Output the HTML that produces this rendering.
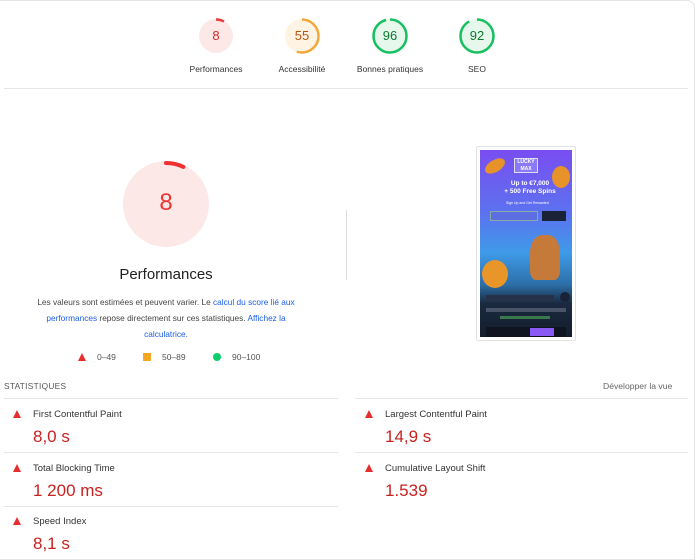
<!DOCTYPE html>
<html><head><meta charset="utf-8"><style>
*{margin:0;padding:0;box-sizing:border-box}
body{width:700px;height:555px;background:#fff;font-family:"Liberation Sans",sans-serif;position:relative;overflow:hidden;color:#212121}
.a{position:absolute}
.frame{left:-2px;top:0;width:697px;height:560px;border:1px solid #e4e4e4;border-radius:0 8px 0 0}
.lbl{font-size:8.5px;color:#333;text-align:center;width:100px}
.num{font-size:13px;text-align:center;width:40px}
.hr{height:1px;background:#e6e6e6}
.tri{width:0;height:0;border-left:4.5px solid transparent;border-right:4.5px solid transparent;border-bottom:8px solid #e62e2e}
.mn{font-size:9.5px;color:#333}
.mv{font-size:17px;color:#c7221f}
a{color:#1a5ee8;text-decoration:none}
</style></head><body>
<div class="a frame"></div>
<svg class="a" style="left:0;top:0" width="700" height="260">
 <g fill="none" stroke-width="2.5">
  <circle cx="216" cy="36" r="17" fill="#fde8e8" stroke="none"/>
  <circle cx="216" cy="36" r="16.5" stroke="#e63b3b" stroke-dasharray="8.3 200" transform="rotate(-90 216 36)"/>
  <circle cx="302" cy="36" r="17" fill="#fff3e3" stroke="none"/>
  <circle cx="302" cy="36" r="16.5" stroke="#f2a83a" stroke-dasharray="57 200" transform="rotate(-90 302 36)"/>
  <circle cx="390" cy="36" r="17" fill="#e6f7ec" stroke="none"/>
  <circle cx="390" cy="36" r="16.5" stroke="#16c060" stroke-dasharray="99.5 200" transform="rotate(-90 390 36)"/>
  <circle cx="477" cy="36" r="17" fill="#e6f7ec" stroke="none"/>
  <circle cx="477" cy="36" r="16.5" stroke="#16c060" stroke-dasharray="95.4 200" transform="rotate(-90 477 36)"/>
  <circle cx="166" cy="204" r="43" fill="#fde8e8" stroke="none"/>
  <circle cx="166" cy="204" r="41" stroke="#f03030" stroke-width="4" stroke-linecap="round" stroke-dasharray="18 400" transform="rotate(-90 166 204)"/>
 </g>
</svg>
<div class="a num" style="left:196px;top:28px;color:#d02a2a">8</div>
<div class="a num" style="left:282px;top:28px;color:#b9560e">55</div>
<div class="a num" style="left:370px;top:28px;color:#0a7a2e">96</div>
<div class="a num" style="left:457px;top:28px;color:#0a7a2e">92</div>
<div class="a lbl" style="left:166px;top:64px">Performances</div>
<div class="a lbl" style="left:252px;top:64px">Accessibilité</div>
<div class="a lbl" style="left:340px;top:64px">Bonnes pratiques</div>
<div class="a lbl" style="left:427px;top:64px">SEO</div>
<div class="a hr" style="left:4px;top:88px;width:684px"></div>

<div class="a" style="left:136px;top:189px;width:60px;text-align:center;font-size:24px;color:#e33">8</div>
<div class="a" style="left:66px;top:266px;width:200px;text-align:center;font-size:15px;color:#222">Performances</div>
<div class="a" style="left:30px;top:294px;width:272px;text-align:center;font-size:8.3px;line-height:16px;color:#444">Les valeurs sont estimées et peuvent varier. Le <a>calcul du score lié aux performances</a> repose directement sur ces statistiques. <a>Affichez la calculatrice.</a></div>
<div class="a tri" style="left:78px;top:353px"></div>
<div class="a mn" style="left:97px;top:352px;font-size:8.5px;color:#555">0–49</div>
<div class="a" style="left:143px;top:353px;width:8px;height:8px;background:#f5a623"></div>
<div class="a mn" style="left:162px;top:352px;font-size:8.5px;color:#555">50–89</div>
<div class="a" style="left:213px;top:353px;width:8px;height:8px;border-radius:50%;background:#0cce6b"></div>
<div class="a mn" style="left:232px;top:352px;font-size:8.5px;color:#555">90–100</div>

<div class="a" style="left:346px;top:210px;width:1px;height:70px;background:#ddd"></div>

<div class="a" style="left:476px;top:146px;width:100px;height:195px;border:1px solid #e2e2e2;border-radius:2px;background:#fff;padding:3px">
 <div style="width:92px;height:187px;background:linear-gradient(180deg,#7a4df0 0%,#5a74f0 35%,#3f9ae8 55%,#2c6fa8 72%,#1a2a40 82%,#141d2c 100%);position:relative;overflow:hidden">
  <div class="a" style="left:34px;top:8px;width:24px;height:15px;background:#8a7af5;border:1px solid #dde;font-size:5px;color:#fff;text-align:center;font-weight:bold;line-height:7px">LUCKY MAX</div>
  <div class="a" style="left:4px;top:10px;width:22px;height:12px;border-radius:50%;background:#e8922a;transform:rotate(-30deg)"></div>
  <div class="a" style="left:72px;top:16px;width:18px;height:22px;border-radius:50%;background:#e8922a"></div>
  <div class="a" style="left:10px;top:30px;width:80px;text-align:center;color:#fff;font-size:6.5px;line-height:8px;font-weight:bold">Up to €7,000<br>+ 500 Free Spins</div>
  <div class="a" style="left:26px;top:51px;font-size:3.5px;color:#fff">Sign Up and Get Rewarded</div>
  <div class="a" style="left:10px;top:61px;width:48px;height:10px;background:#5c6ee0;border:1px solid #8aa"></div>
  <div class="a" style="left:62px;top:61px;width:24px;height:10px;background:#1a2238"></div>
  <div class="a" style="left:50px;top:85px;width:30px;height:45px;background:#c57a3a;border-radius:40% 40% 20% 20%"></div>
  <div class="a" style="left:2px;top:110px;width:26px;height:28px;border-radius:50%;background:#e8952a"></div>
  <div class="a" style="left:6px;top:145px;width:68px;height:7px;background:#25324a"></div>
  <div class="a" style="left:80px;top:142px;width:10px;height:10px;border-radius:50%;background:#1a2238"></div>
  <div class="a" style="left:6px;top:158px;width:80px;height:4px;background:#4a5468"></div>
  <div class="a" style="left:20px;top:166px;width:50px;height:3px;background:#3a7a4a"></div>
  <div class="a" style="left:6px;top:177px;width:80px;height:10px;background:#0f1420"></div>
  <div class="a" style="left:50px;top:178px;width:24px;height:8px;background:#8a5af5"></div>
 </div>
</div>

<div class="a" style="left:4px;top:381px;font-size:8.3px;color:#555;letter-spacing:.3px">STATISTIQUES</div>
<div class="a" style="left:603px;top:381px;font-size:8.6px;color:#666">Développer la vue</div>
<div class="a hr" style="left:4px;top:398px;width:334px"></div>
<div class="a hr" style="left:355px;top:398px;width:333px"></div>

<div class="a tri" style="left:13px;top:410px"></div>
<div class="a mn" style="left:33px;top:409px">First Contentful Paint</div>
<div class="a mv" style="left:33px;top:427px">8,0 s</div>
<div class="a hr" style="left:4px;top:452px;width:334px"></div>
<div class="a tri" style="left:13px;top:464px"></div>
<div class="a mn" style="left:33px;top:463px">Total Blocking Time</div>
<div class="a mv" style="left:33px;top:481px">1 200 ms</div>
<div class="a hr" style="left:4px;top:506px;width:334px"></div>
<div class="a tri" style="left:13px;top:517px"></div>
<div class="a mn" style="left:33px;top:516px">Speed Index</div>
<div class="a mv" style="left:33px;top:534px">8,1 s</div>

<div class="a tri" style="left:365px;top:410px"></div>
<div class="a mn" style="left:385px;top:409px">Largest Contentful Paint</div>
<div class="a mv" style="left:385px;top:427px">14,9 s</div>
<div class="a hr" style="left:355px;top:452px;width:333px"></div>
<div class="a tri" style="left:365px;top:464px"></div>
<div class="a mn" style="left:385px;top:463px">Cumulative Layout Shift</div>
<div class="a mv" style="left:385px;top:481px">1.539</div>
</body></html>
